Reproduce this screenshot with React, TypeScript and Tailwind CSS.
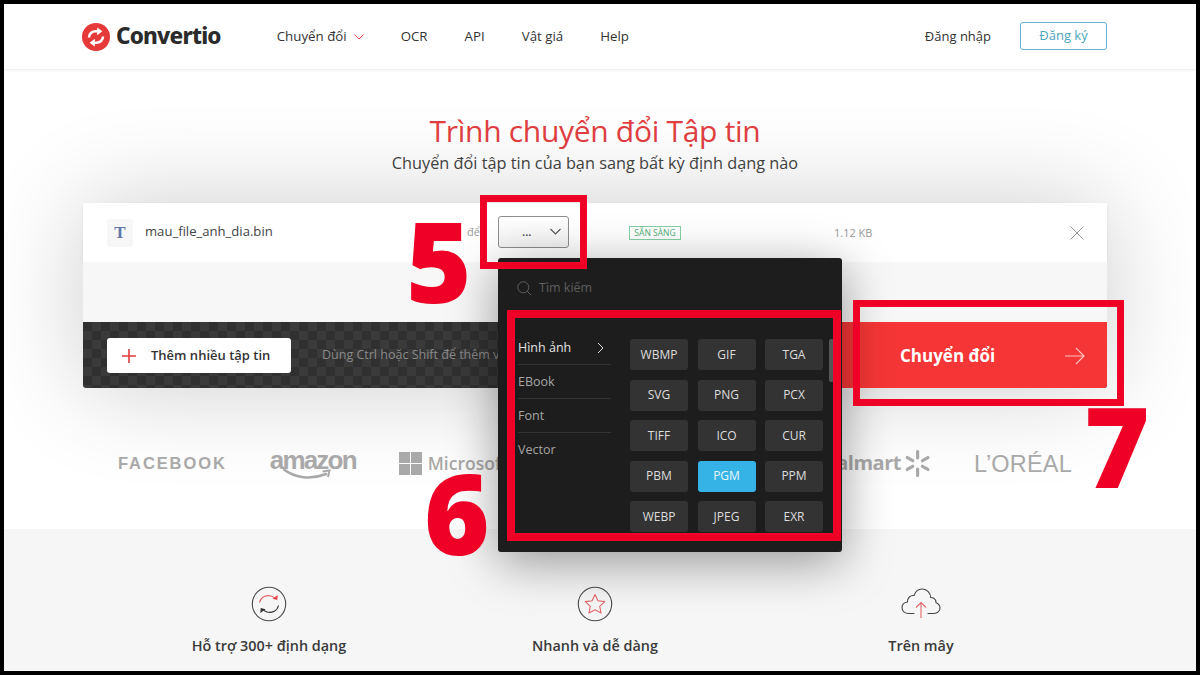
import React from "react";

const formats = ["WBMP","GIF","TGA","SVG","PNG","PCX","TIFF","ICO","CUR","PBM","PGM","PPM","WEBP","JPEG","EXR"];

function LogoMark() {
  return (
    <svg width="28" height="28" viewBox="0 0 28 28" className="shrink-0">
      <circle cx="14" cy="14" r="14" fill="#e5393a" />
      <path d="M7 14.5c0-3.6 2.9-6.3 6.6-6.3h2.6" fill="none" stroke="#fff" strokeWidth="2.6" />
      <path d="M15.2 4.4l5.2 3.9-5.2 3.9z" fill="#fff" />
      <path d="M21 13.5c0 3.6-2.9 6.3-6.6 6.3h-2.6" fill="none" stroke="#fff" strokeWidth="2.6" />
      <path d="M12.8 23.6l-5.2-3.9 5.2-3.9z" fill="#fff" />
    </svg>
  );
}

function ConvertIcon() {
  return (
    <svg width="36" height="36" viewBox="0 0 36 36" fill="none">
      <circle cx="18" cy="18" r="16.7" stroke="#4a4a4a" strokeWidth="1.1" />
      <path d="M8.5 16.5C9.5 11.5 15 8.5 20 10c1.800.5 3.300 1.400 4.500 2.800" stroke="#e4666a" strokeWidth="1.1" />
      <path d="M21.500 12.800l4.800 1.300.4-5z" fill="#e4464a" />
      <path d="M27.500 19.500C26.500 24.500 21 27.500 16 26c-1.800-.5-3.300-1.400-4.500-2.800" stroke="#333" strokeWidth="1.1" />
      <path d="M14.500 23.200l-4.800-1.300-.4 5z" fill="#333" />
    </svg>
  );
}

function StarIcon() {
  return (
    <svg width="36" height="36" viewBox="0 0 36 36" fill="none">
      <circle cx="18" cy="18" r="16.700" stroke="#4a4a4a" strokeWidth="1.100" />
      <path d="M18 8.500l2.900 6.300 6.900.8-5.100 4.700 1.400 6.800-6.100-3.400-6.100 3.400 1.400-6.800-5.100-4.700 6.900-.8z" stroke="#e4666a" strokeWidth="1.100" strokeLinejoin="round" />
    </svg>
  );
}

function CloudIcon() {
  return (
    <svg width="40" height="36" viewBox="0 0 40 36" fill="none">
      <path d="M13 27.500H7.500C3.800 27.500 1 25 1 21.700c0-3 2.300-5.300 5.500-5.700C6.300 11.800 9.500 9 13 9.500 14.500 5.200 18 2.800 21.500 3c4.500.2 8 3.700 8.200 8.500 1-.2 5.300.6 5.400 5.200 2 .8 3.900 2.500 3.900 5.300 0 3.200-2.700 5.500-6 5.500H27" stroke="#444" strokeWidth="1.100" strokeLinecap="round" />
      <path d="M20 32V16.500M15 21.500l5-5 5 5" stroke="#e4666a" strokeWidth="1.100" />
    </svg>
  );
}

function Amazon() {
  return (
    <div className="relative h-[40px] w-[86px]">
      <span className="absolute left-0 top-[-3px] font-['Liberation_Sans',sans-serif] text-[26px] leading-[40px] font-bold tracking-[-1.8px] text-[#a9a9a9]">amazon</span>
      <svg width="54" height="14" viewBox="0 0 54 14" fill="none" className="absolute left-[13px] top-[25px]">
        <path d="M1 1.500C12 10 28 12 43 6" stroke="#a9a9a9" strokeWidth="2.600" strokeLinecap="round" />
        <path d="M39.500 3.500l7-1-1.500 6.500" stroke="#a9a9a9" strokeWidth="2" />
      </svg>
    </div>
  );
}

function Spark() {
  return (
    <svg width="27" height="27" viewBox="0 0 27 27" fill="#a9a9a9">
      <rect x="12" y="0" width="3.200" height="9.500" rx="1.600" />
      <rect x="12" y="17.500" width="3.200" height="9.500" rx="1.600" />
      <rect x="12" y="0" width="3.200" height="9.500" rx="1.600" transform="rotate(60 13.600 13.500)" />
      <rect x="12" y="17.500" width="3.200" height="9.500" rx="1.600" transform="rotate(60 13.600 13.500)" />
      <rect x="12" y="0" width="3.200" height="9.500" rx="1.600" transform="rotate(-60 13.600 13.500)" />
      <rect x="12" y="17.500" width="3.200" height="9.500" rx="1.600" transform="rotate(-60 13.600 13.500)" />
    </svg>
  );
}

export default function App() {
  return (
    <div className="relative h-[675px] w-[1200px] overflow-hidden bg-black px-1 pt-1 pb-1 font-['Open_Sans','Noto_Sans',sans-serif] text-[#333]">
      <div className="flex h-full flex-col overflow-hidden bg-white">
        <header className="relative z-10 flex h-[65px] shrink-0 items-center bg-white pl-[78px] pr-[89px] shadow-[0_1px_3px_rgba(0,0,0,0.1)]">
          <div className="flex items-center gap-[6px]">
            <LogoMark />
            <span className="font-['Noto_Sans',sans-serif] text-[22.5px] leading-none font-extrabold tracking-[-0.8px] text-[#2b2b2b]">Convertio</span>
          </div>
          <nav className="ml-[56px] flex items-center gap-[37px] text-[13.3px]">
            <span className="flex items-center gap-[7px]">
              Chuyển đổi
              <svg width="10" height="6" viewBox="0 0 10 6" fill="none"><path d="M0.500 0.500L5 5l4.500-4.500" stroke="#e4464a" /></svg>
            </span>
            <span>OCR</span>
            <span>API</span>
            <span>Vật giá</span>
            <span>Help</span>
          </nav>
          <span className="ml-auto text-[13px]">Đăng nhập</span>
          <button className="ml-[29px] -mt-[1px] h-[28px] w-[87px] rounded-[3px] border border-[#5fb4cc] text-[13px] text-[#4da5c0]">Đăng ký</button>
        </header>

        <main className="flex h-[460px] shrink-0 flex-col pt-[42px]">
          <h1 className="pr-[10px] text-center text-[30px] leading-[40px] font-normal tracking-[-0.3px] text-[#e23f42]">Trình chuyển đổi Tập tin</h1>
          <p className="pr-[10px] text-center text-[16.3px] leading-[24px] text-[#444]">Chuyển đổi tập tin của bạn sang bất kỳ định dạng nào</p>

          <section className="mx-[79px] mt-[28px] w-[1024px] shrink-0 rounded-[3px] shadow-[0_0_100px_rgba(0,0,0,0.2)]">
            <div className="flex h-[59px] items-center bg-white pl-[24px] shadow-[0_1px_4px_rgba(0,0,0,0.06)]">
              <div className="flex h-[28px] w-[26px] items-center justify-center rounded-[3px] bg-[#f7f7f7] font-['Liberation_Serif',serif] text-[17px] font-bold text-[#5f78a8]">T</div>
              <span className="ml-[12px] -mt-[2px] w-[322px] text-[13.1px] text-[#444]">mau_file_anh_dia.bin</span>
              <span className="w-[31px] text-[11px] text-[#999]">để</span>
              <div className="-mt-[2px] flex h-[32px] w-[71px] items-center rounded-[3px] border border-[#8d8d8d] bg-gradient-to-b from-white to-[#f3f3f3] pl-[23px]">
                <span className="text-[11px] leading-none font-bold text-[#555]">...</span>
                <svg width="11" height="7" viewBox="0 0 11 7" fill="none" className="ml-[19px]"><path d="M0.500 1l5 5 5-5" stroke="#555" strokeWidth="1.100" /></svg>
              </div>
              <span className="ml-[60px] mt-[1px] flex h-[14px] w-[52px] items-center justify-center border border-[#86cfa4] text-[8.5px] leading-none text-[#4eae76]">SẴN SÀNG</span>
              <span className="ml-[153px] mt-[1px] text-[11px] text-[#999]">1.12 KB</span>
              <svg width="14" height="14" viewBox="0 0 14 14" fill="none" className="ml-auto mr-[23px]"><path d="M0.500 0.500l13 13M13.500 0.500l-13 13" stroke="#999" /></svg>
            </div>
            <div className="h-[60px] bg-[#f7f7f7]" />
            <div className="flex h-[66px] items-center overflow-hidden rounded-b-[3px] bg-[#333] bg-[repeating-conic-gradient(#3a3a3a_0%_25%,#303030_0%_50%)] bg-[length:18px_18px] pl-[24px]">
              <button className="mt-[1px] flex h-[35px] w-[184px] items-center rounded-[3px] bg-white pl-[15px] text-[13px] font-semibold text-[#333]">
                <svg width="14" height="14" viewBox="0 0 14 14" fill="none"><path d="M7 0v14M0 7h14" stroke="#e4393c" strokeWidth="1.600" /></svg>
                <span className="ml-[15px]">Thêm nhiều tập tin</span>
              </button>
              <span className="ml-[31px] mt-[1px] w-[240px] whitespace-nowrap text-[12.5px] text-[#8a8a8a]">Dùng Ctrl hoặc Shift để thêm vào</span>
              <button className="ml-auto flex h-full w-[270px] items-center bg-[#f63636] pl-[63px] pr-[22px] pt-[2px] text-[17px] font-bold text-white">
                Chuyển đổi
                <svg width="20" height="18" viewBox="0 0 20 18" fill="none" className="ml-auto opacity-70"><path d="M0 9h19M11 1l8 8-8 8" stroke="#fff" strokeWidth="1.100" /></svg>
              </button>
            </div>
          </section>

          <div className="ml-[114px] mr-[124px] mt-[55px] flex h-[40px] shrink-0 items-center gap-[43px]">
            <span className="font-['Liberation_Sans',sans-serif] text-[16.5px] font-bold tracking-[1.9px] text-[#a9a9a9]">FACEBOOK</span>
            <Amazon />
            <div className="flex items-center gap-[6px]">
              <div className="grid h-[23px] w-[23px] grid-cols-2 gap-[1px]">
                <span className="bg-[#a9a9a9]" /><span className="bg-[#a9a9a9]" /><span className="bg-[#a9a9a9]" /><span className="bg-[#a9a9a9]" />
              </div>
              <span className="text-[17.5px] font-semibold text-[#a9a9a9]">Microsoft</span>
            </div>
            <div className="ml-auto flex items-center gap-[3px]">
              <span className="text-[20px] font-bold tracking-[-0.5px] text-[#a9a9a9]">Walmart</span>
              <Spark />
            </div>
            <span className="pt-[3px] font-['Liberation_Sans',sans-serif] text-[23.5px] font-normal tracking-[0.2px] text-[#a9a9a9]">L’ORÉAL</span>
          </div>
        </main>

        <section className="grid flex-1 grid-cols-[326px_326px_326px] content-start bg-[#f6f6f6] pl-[102px] pt-[57px]">
          {[
            ["Hỗ trợ 300+ định dạng", <ConvertIcon key="a" />],
            ["Nhanh và dễ dàng", <StarIcon key="b" />],
            ["Trên mây", <CloudIcon key="c" />],
          ].map(([title, icon], i) => (
            <div key={i} className="flex flex-col items-center">
              <div className="flex h-[36px] items-center">{icon}</div>
              <div className="mt-[12px] text-[14.4px] leading-[24px] font-semibold text-[#3a3a3a]">{title}</div>
            </div>
          ))}
        </section>
      </div>

      {/* Format dropdown overlay */}
      <div className="absolute left-[498px] top-[258px] h-[294px] w-[344px] rounded-[3px] bg-[#1d1d1d] shadow-[0_10px_50px_rgba(0,0,0,0.4)]">
        <div className="flex h-[60px] items-center pl-[19px] pt-[1px]">
          <svg width="15" height="15" viewBox="0 0 15 15" fill="none"><circle cx="6.300" cy="6.300" r="5.500" stroke="#5e5e5e" /><path d="M10.300 10.300l4 4" stroke="#5e5e5e" /></svg>
          <span className="ml-[7px] text-[12.5px] text-[#5e5e5e]">Tìm kiếm</span>
        </div>
        <div className="flex">
          <ul className="ml-[20px] mt-[13px] w-[93px] text-[12.500px] text-[#a5a5a5]">
            <li className="flex h-[34px] items-center justify-between border-b border-[#333] pr-[7px] pt-[1px] text-[#e5e5e5]">
              Hình ảnh
              <svg width="7" height="12" viewBox="0 0 7 12" fill="none"><path d="M1 1l5 5-5 5" stroke="#ddd" /></svg>
            </li>
            <li className="flex h-[34px] items-center border-b border-[#333] pt-[1px]">EBook</li>
            <li className="flex h-[34px] items-center border-b border-[#333] pt-[1px]">Font</li>
            <li className="flex h-[34px] items-center pt-[1px]">Vector</li>
          </ul>
          <div className="ml-[19px] mt-[21px] grid grid-cols-[58px_58px_58px] gap-x-[9.500px] gap-y-[9.500px]">
            {formats.map((f) => (
              <div key={f} className={f === "PGM" ? "flex h-[31px] items-center justify-center rounded-[3px] bg-[#35b3e6] text-[12px] text-[#e8f7fd]" : "flex h-[31px] items-center justify-center rounded-[3px] bg-[#333] text-[12px] text-[#ddd]"}>{f}</div>
            ))}
          </div>
          <div className="ml-[6px] mt-[21px] h-[43px] w-[5px] rounded-[2px] bg-[#555]" />
        </div>
      </div>

      {/* Annotation overlays */}
      <div className="absolute left-[480px] top-[195px] h-[74px] w-[107px] border-[7px] border-[#ee0027]" />
      <div className="absolute left-[507px] top-[310px] h-[231px] w-[334px] border-[8px] border-[#ee0027]" />
      <div className="absolute left-[853px] top-[300px] h-[106px] w-[271px] border-[7px] border-[#ee0027]" />
      <span className="absolute left-[406px] top-[192px] font-['Open_Sans',sans-serif] text-[112px] leading-[136px] font-extrabold text-[#ee0027]">5</span>
      <span className="absolute left-[424px] top-[444px] font-['Open_Sans',sans-serif] text-[112px] leading-[136px] font-extrabold text-[#ee0027]">6</span>
      <span className="absolute left-[1084px] top-[377px] font-['Open_Sans',sans-serif] text-[112px] leading-[136px] font-extrabold text-[#ee0027]">7</span>
    </div>
  );
}
